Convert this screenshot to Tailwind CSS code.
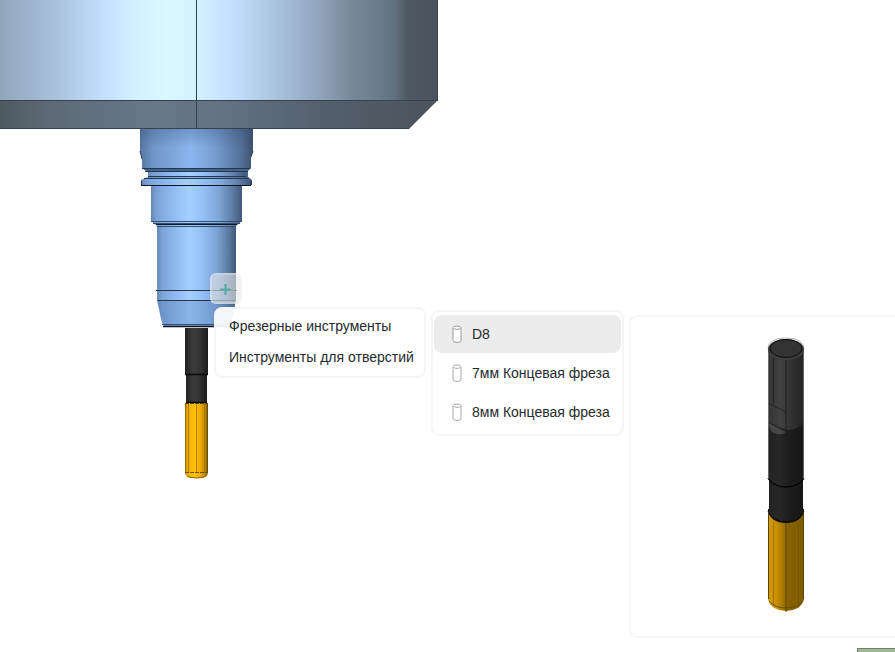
<!DOCTYPE html>
<html lang="ru">
<head>
  <meta charset="UTF-8" />
  <meta name="viewport" content="width=device-width, initial-scale=1" />
  <title>Выбор инструмента</title>
  <script src="https://cdn.jsdelivr.net/npm/@tailwindcss/browser@4"></script>
</head>
<body class="bg-white text-sm text-[#1f2a2e] font-['Liberation_Sans',Arial,sans-serif]">

  <main class="relative h-screen overflow-hidden">

    <!-- 3D view: spindle, holder, tool -->
    <svg class="absolute inset-0 w-full h-full" aria-hidden="true">
      <defs>
        <linearGradient id="spindle" gradientUnits="userSpaceOnUse" x1="0" y1="0" x2="438" y2="0">
          <stop offset="0" stop-color="#92a6bb" />
          <stop offset=".12" stop-color="#a8bfda" />
          <stop offset=".24" stop-color="#c4e0ff" />
          <stop offset=".31" stop-color="#d1f1ff" />
          <stop offset=".38" stop-color="#daf8ff" />
          <stop offset=".44" stop-color="#d5f3ff" />
          <stop offset=".53" stop-color="#c2dfff" />
          <stop offset=".60" stop-color="#b2cde6" />
          <stop offset=".72" stop-color="#93a7bf" />
          <stop offset=".80" stop-color="#788a9a" />
          <stop offset=".90" stop-color="#63727f" />
          <stop offset=".93" stop-color="#4f5963" />
          <stop offset="1" stop-color="#49535d" />
        </linearGradient>
        <linearGradient id="chamfer" gradientUnits="userSpaceOnUse" x1="0" y1="0" x2="438" y2="0">
          <stop offset="0" stop-color="#4e5961" />
          <stop offset=".1" stop-color="#5c6974" />
          <stop offset=".35" stop-color="#687888" />
          <stop offset=".5" stop-color="#647282" />
          <stop offset=".75" stop-color="#535f6b" />
          <stop offset="1" stop-color="#4b535d" />
        </linearGradient>
        <linearGradient id="holder">
          <stop offset="0" stop-color="#6688b4" />
          <stop offset=".06" stop-color="#7ba2d6" />
          <stop offset=".22" stop-color="#8db8f0" />
          <stop offset=".42" stop-color="#a3d0ff" />
          <stop offset=".58" stop-color="#92bff7" />
          <stop offset=".75" stop-color="#7da4d5" />
          <stop offset=".9" stop-color="#5c7ba3" />
          <stop offset="1" stop-color="#42597a" />
        </linearGradient>
        <linearGradient id="holderTop">
          <stop offset="0" stop-color="#5776a2" />
          <stop offset=".12" stop-color="#7096c8" />
          <stop offset=".45" stop-color="#8bb6ef" />
          <stop offset=".65" stop-color="#789fd3" />
          <stop offset=".9" stop-color="#526f96" />
          <stop offset="1" stop-color="#3d516e" />
        </linearGradient>
        <linearGradient id="shade" x2="0" y2="1">
          <stop offset="0" stop-color="#304868" stop-opacity=".3" />
          <stop offset=".5" stop-color="#304868" stop-opacity="0" />
        </linearGradient>
        <linearGradient id="shank">
          <stop offset="0" stop-color="#202020" />
          <stop offset=".35" stop-color="#3c3c3c" />
          <stop offset=".65" stop-color="#343434" />
          <stop offset="1" stop-color="#1a1a1a" />
        </linearGradient>
        <linearGradient id="flute">
          <stop offset="0" stop-color="#b88200" />
          <stop offset=".12" stop-color="#f0ac00" />
          <stop offset=".4" stop-color="#ffc107" />
          <stop offset=".65" stop-color="#f0ad00" />
          <stop offset=".85" stop-color="#c48d00" />
          <stop offset="1" stop-color="#7c5900" />
        </linearGradient>
      </defs>

      <!-- holder -->
      <path d="M140 128H253V151L251 157V168L248 171V177L252 180V185H141V180L148 177V171L142 168V159L140 151Z" fill="url(#holderTop)" />
      <path d="M142 159L140 151M251 157L253 151" stroke="#293b52" />
      <path d="M140 128H253V151L251 157V168H142V159L140 151Z" fill="url(#shade)" />
      <path d="M142 168H251L247 171H146Z" fill="#476488" />
      <path d="M148 171H245V177H148Z" fill="url(#holder)" />
      <path d="M145 178H248L251 181V185H141V181Z" fill="url(#holder)" />
      <path d="M142 168.500H250M145 171.500H248M148 176.500H246M144 178.500H249" stroke="#243750" />
      <path d="M141.500 181V185M251 181V185" stroke="#243750" />
      <path d="M141 185.500H251" stroke="#0c1420" />
      <path d="M151 186H242V221L236 226H157L151 221Z" fill="url(#holder)" />
      <path d="M151 221.500H242M153 223.500H240" stroke="#34506f" />
      <path d="M156 224.500H237" stroke="#0f1825" />
      <path d="M157 226H236V300L231 323L227 327H165L162 323L157 300Z" fill="url(#holder)" />
      <path d="M157 226.500H236" stroke="#34506f" />
      <path d="M157 300H236L231 323L227 327H165L162 323Z" fill="#4f78b0" fill-opacity=".3" />
      <path d="M156 290.500H237M158 300.500H236" stroke="#263548" />
      <path d="M162 324.500H230" stroke="#34506f" />
      <path d="M163 326.500H230" stroke="#0c1420" stroke-width="1.500" />

      <!-- tool in the holder -->
      <path d="M185 328H208V375H185Z" fill="url(#shank)" />
      <path d="M186 375H207V403H186Z" fill="url(#shank)" />
      <path d="M185 374.500H208M186 402.500H207" stroke="#080808" stroke-width="1.500" />
      <path d="M185 403H208V473Q207 478 201 478H192Q186 478 185 473Z" fill="url(#flute)" />
      <path d="M185.500 404V473M188.500 404V473M196.500 404V473M204.500 404V473" stroke="#8c6500" stroke-opacity=".65" />
      <path d="M207.500 404V473" stroke="#664900" />
      <path d="M185 403.500H208" stroke="#5a4100" stroke-dasharray="4 1" />
      <path d="M185 472.500H208" stroke="#6d5000" stroke-dasharray="4 1" />
      <path d="M187 476Q190 478 197 478T207 475" fill="none" stroke="#8b6500" />

      <!-- spindle -->
      <path d="M0 0H438V100H0Z" fill="url(#spindle)" />
      <path d="M0 100H438L409 129H0Z" fill="url(#chamfer)" />
      <path d="M0 100.500H438M0 128.500H409M196.500 0V129M437.500 0V100" stroke="#34424d" />

      <!-- workpiece corner -->
      <rect x="857" y="648" width="100%" height="100%" fill="#a0b994" />
      <path d="M857.500 652V648.500H2000" fill="none" stroke="#71826a" />
    </svg>

    <div class="absolute left-[210px] top-[273px]">
      <button type="button" aria-label="Добавить инструмент" class="flex h-[31px] w-8 items-center justify-center rounded-md border-2 border-[#f5f5f5]/30 bg-[#eaeaea]/60">
        <svg class="size-3" viewBox="0 0 12 12" aria-hidden="true">
          <path d="M5.500 1V12M0 6.500H11" stroke="#54aaa4" stroke-width="2" />
        </svg>
      </button>

      <div class="ml-1 mt-[3px] flex items-start">
        <!-- tool types -->
        <nav class="flex w-[212px] shrink-0 flex-col rounded-lg border-2 border-[#f5f5f5] bg-white/93 pt-px pb-1">
          <button type="button" class="h-[31px] px-[13px] text-left whitespace-nowrap">Фрезерные инструменты</button>
          <button type="button" class="h-[31px] px-[13px] text-left whitespace-nowrap">Инструменты для отверстий</button>
        </nav>

        <!-- tools of the chosen type -->
        <nav class="mt-[3px] ml-[5px] flex w-[193px] shrink-0 flex-col gap-px rounded-lg border-2 border-[#f5f5f5] bg-white px-px pt-[3px] pb-[3px]">
          <button type="button" class="flex h-[38px] items-center gap-[10px] rounded-lg bg-[#ececec] pl-[18px] text-left whitespace-nowrap">
            <svg class="h-[18px] w-[10px] shrink-0" viewBox="0 0 10 18" fill="#fff" stroke="#999" aria-hidden="true">
              <path d="M1 3V15.500Q1 17.500 5 17.500T9 15.500V3" />
              <path d="M1 2.500Q1 1 5 1T9 2.500Q8 4.500 5 4.500T1 2.500Z" />
            </svg>
            D8
          </button>
          <button type="button" class="flex h-[38px] items-center gap-[10px] rounded-lg pl-[18px] text-left whitespace-nowrap">
            <svg class="h-[18px] w-[10px] shrink-0" viewBox="0 0 10 18" fill="#fff" stroke="#aaa" aria-hidden="true">
              <path d="M1 3V15.500Q1 17.500 5 17.500T9 15.500V3" />
              <path d="M1 2.500Q1 1 5 1T9 2.500Q8 4.500 5 4.500T1 2.500Z" />
            </svg>
            7мм Концевая фреза
          </button>
          <button type="button" class="flex h-[38px] items-center gap-[10px] rounded-lg pl-[18px] text-left whitespace-nowrap">
            <svg class="h-[18px] w-[10px] shrink-0" viewBox="0 0 10 18" fill="#fff" stroke="#aaa" aria-hidden="true">
              <path d="M1 3V15.500Q1 17.500 5 17.500T9 15.500V3" />
              <path d="M1 2.500Q1 1 5 1T9 2.500Q8 4.500 5 4.500T1 2.500Z" />
            </svg>
            8мм Концевая фреза
          </button>
        </nav>

        <!-- preview of the tool -->
        <section aria-label="Просмотр инструмента" class="mt-2 ml-[5px] flex w-[314px] shrink-0 justify-center rounded-lg border-2 border-[#f5f5f5] bg-white pt-5 pb-6">
          <svg class="h-[275px] w-10" viewBox="0 0 40 275" aria-hidden="true">
            <defs>
              <linearGradient id="pTop">
                <stop offset="0" stop-color="#343434" />
                <stop offset=".35" stop-color="#414141" />
                <stop offset=".6" stop-color="#343434" />
                <stop offset="1" stop-color="#242424" />
              </linearGradient>
              <linearGradient id="pBody">
                <stop offset="0" stop-color="#222" />
                <stop offset=".3" stop-color="#272727" />
                <stop offset=".7" stop-color="#1a1a1a" />
                <stop offset="1" stop-color="#171717" />
              </linearGradient>
              <linearGradient id="pFlute">
                <stop offset="0" stop-color="#d59a00" />
                <stop offset=".25" stop-color="#c89000" />
                <stop offset=".5" stop-color="#906900" />
                <stop offset=".6" stop-color="#856000" />
                <stop offset="1" stop-color="#805d00" />
              </linearGradient>
            </defs>
            <!-- cutting part -->
            <path d="M2 176H38V262Q37 267 32 271Q26 274 20 274T8 271Q3 267 2 262Z" fill="url(#pFlute)" />
            <path d="M7.500 185V268M32.500 185V268" stroke="#5c4400" stroke-opacity=".4" />
            <path d="M20 185V275M2.500 176V262M37.500 176V262" stroke="#5b4300" />
            <path d="M3 264Q9 271 20 271T37 264" fill="none" stroke="#6b4f00" />
            <!-- neck -->
            <path d="M2 174Q5 186 20 186T38 174V172H2Z" fill="#1b1700" />
            <path d="M3 142H37V176Q31 184 20 184T3 176Z" fill="url(#pBody)" />
            <path d="M2 174Q6 185 20 185T38 174" fill="none" stroke="#090909" />
            <!-- body and shank -->
            <path d="M2 80H38V142Q32 151 20 151T2 142Z" fill="url(#pBody)" />
            <path d="M2 141Q7 150 20 150T38 141" fill="none" stroke="#050505" stroke-width="1.500" />
            <path d="M2 12H38V84Q33 93 21 93L2 86Z" fill="url(#pTop)" />
            <path d="M2 86L20 94Q18 98 11 97Q4 96 2 86Z" fill="#484848" />
            <path d="M2 66L20 75V95L2 85M20 23V75M7.500 20V67" fill="none" stroke="#1b1b1b" stroke-opacity=".75" />
            <path d="M2.500 12V142M37.500 12V142" stroke="#aaa" stroke-opacity=".5" />
            <path d="M2 12Q2 1 20 1T38 12" fill="#f5f5f5" stroke="#b0bab8" />
            <ellipse cx="20" cy="12.500" rx="18" ry="10.500" fill="#3e3e3e" />
            <ellipse cx="20" cy="11.500" rx="16" ry="9" fill="#333" stroke="#0b0b0b" />
          </svg>
        </section>
      </div>
    </div>
  </main>

</body>
</html>
